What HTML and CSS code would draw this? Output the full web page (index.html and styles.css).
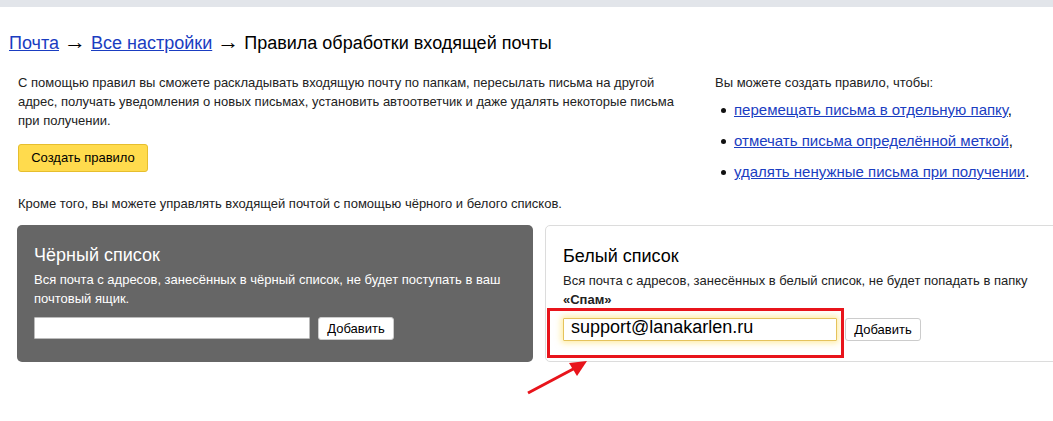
FILE: index.html
```html
<!DOCTYPE html>
<html lang="ru">
<head>
    <meta charset="UTF-8">
    <title>Правила обработки входящей почты</title>
    <link rel="stylesheet" href="styles.css">
</head>
<body>
<div class="topbar"></div>
<div class="page">
    <h1 class="crumbs"><a href="#">Почта</a> <span class="sep">→</span> <a href="#">Все настройки</a> <span class="sep">→</span> Правила обработки входящей почты</h1>

    <div class="intro">
        <div class="intro-main">
            <p>С помощью правил вы сможете раскладывать входящую почту по папкам, пересылать письма на другой адрес, получать уведомления о новых письмах, установить автоответчик и даже удалять некоторые письма при получении.</p>
            <div class="btn-create">Создать правило</div>
        </div>
        <div class="intro-side">
            <p>Вы можете создать правило, чтобы:</p>
            <ul>
                <li><a href="#">перемещать письма в отдельную папку</a>,</li>
                <li><a href="#">отмечать письма определённой меткой</a>,</li>
                <li><a href="#">удалять ненужные письма при получении</a>.</li>
            </ul>
        </div>
    </div>

    <p class="also">Кроме того, вы можете управлять входящей почтой с помощью чёрного и белого списков.</p>

    <div class="lists">
        <div class="card card-black">
            <h2>Чёрный список</h2>
            <p>Вся почта с адресов, занесённых в чёрный список, не будет поступать в ваш почтовый ящик.</p>
            <div class="row">
                <div class="field"></div>
                <div class="btn-add">Добавить</div>
            </div>
        </div>
        <div class="card card-white">
            <h2>Белый список</h2>
            <p>Вся почта с адресов, занесённых в белый список, не будет попадать в папку <b>«Спам»</b></p>
            <div class="row">
                <div class="field field-focus">support@lanakarlen.ru</div>
                <div class="btn-add">Добавить</div>
            </div>
            <div class="mark"></div>
        </div>
    </div>

    <svg class="arrow" width="70" height="40" viewBox="0 0 70 40">
        <line x1="3" y1="37" x2="52" y2="11" stroke="#e8141b" stroke-width="3"/>
        <polygon points="62,5 44,7 52,20" fill="#e8141b"/>
    </svg>
</div>
</body>
</html>
```

FILE: styles.css
```css
*{
    margin: 0;
    padding: 0;
    box-sizing: border-box;
}
body{
    font-family: "Liberation Sans", Arial, sans-serif;
    color: #000;
    background: #fff;
    overflow: hidden;
}
a{
    color: #1a3dc1;
}
.topbar{
    height: 7px;
    background-color: #e2e5ea;
}
.page{
    position: relative;
    height: 414px;
    padding-top: 25px;
}
.crumbs{
    font-size: 18px;
    font-weight: normal;
    line-height: 22px;
    margin-left: 9px;
}
.crumbs .sep{
    font-size: 22px;
    line-height: 0;
}
.intro{
    display: flex;
    margin-top: 19px;
}
.intro-main{
    width: 715px;
    padding-left: 18px;
}
.intro-main p{
    font-size: 13px;
    line-height: 19px;
    color: #222;
    width: 665px;
}
.btn-create{
    width: 130px;
    height: 28px;
    margin-top: 14px;
    background-color: #ffdb4d;
    border: 1px solid #e6be2e;
    border-radius: 3px;
    font-size: 13px;
    line-height: 26px;
    text-align: center;
}
.intro-side p{
    font-size: 13px;
    line-height: 19px;
    color: #222;
}
.intro-side ul{
    list-style: none;
    margin-top: 2px;
}
.intro-side li{
    position: relative;
    font-size: 15px;
    line-height: 31px;
    padding-left: 19px;
}
.intro-side li:before{
    content: "";
    position: absolute;
    left: 6px;
    top: 14px;
    width: 5px;
    height: 5px;
    border-radius: 50%;
    background: #111;
}
.also{
    font-size: 13px;
    line-height: 19px;
    color: #222;
    margin: 7px 0 0 18px;
}
.lists{
    display: flex;
    gap: 12px;
    margin: 12px 0 0 17px;
}
.card{
    position: relative;
    width: 516px;
    height: 137px;
    border-radius: 5px;
    padding: 19px 17px 0;
    flex-shrink: 0;
}
.card h2{
    font-size: 18px;
    font-weight: normal;
    line-height: 22px;
}
.card p{
    font-size: 13px;
    line-height: 19px;
    margin-top: 4px;
}
.card-black{
    background-color: #666;
    color: #fff;
}
.card-white{
    border: 1px solid #dcdcdc;
    color: #222;
}
.card-white h2{
    color: #000;
}
.row{
    display: flex;
    gap: 8px;
    margin-top: 9px;
}
.field{
    width: 276px;
    height: 22px;
    background: #fff;
    border: 1px solid #bbb;
    border-radius: 1px;
}
.field-focus{
    width: 274px;
    height: 23px;
    border: 1px solid #e5c35c;
    box-shadow: 0 0 6px 2px rgba(255, 220, 90, 0.55);
    font-size: 18px;
    line-height: 17px;
    padding-left: 7px;
    color: #000;
}
.btn-add{
    width: 76px;
    height: 23px;
    background: #fff;
    border: 1px solid #ccc;
    border-radius: 3px;
    font-size: 13px;
    line-height: 21px;
    text-align: center;
    color: #000;
}
.mark{
    position: absolute;
    left: 1px;
    top: 82px;
    width: 297px;
    height: 50px;
    border: 3px solid #e8141b;
}
.arrow{
    position: absolute;
    left: 525px;
    top: 349px;
}
```
